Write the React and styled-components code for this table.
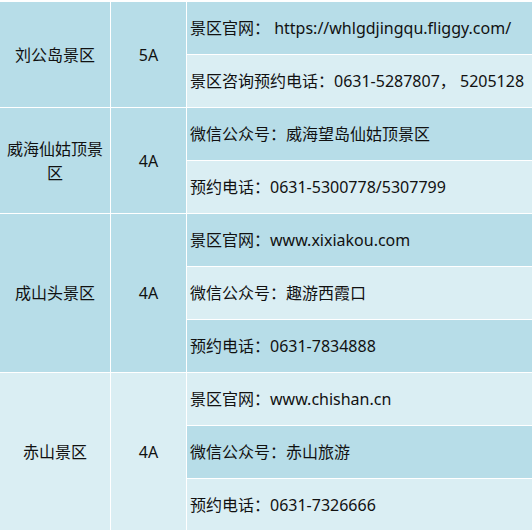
import React from 'react';
import styled, { createGlobalStyle } from 'styled-components';

const GlobalStyle = createGlobalStyle`
  body {
    margin: 0;
    background: #ffffff;
    overflow: hidden;
    font-family: "Noto Sans", "Noto Sans CJK SC", sans-serif;
  }
`;

const DARK = '#b7dde8';
const LIGHT = '#daeef3';

// whole table: groups stacked with 1px white lines between
const Table = styled.div`
  display: flex;
  flex-direction: column;
  gap: 1px;
  padding-top: 2px;
  background: #ffffff;
  color: #111;
  font-size: 16px;
  line-height: 24px;
`;

const Group = styled.div`
  display: grid;
  grid-template-columns: 110px 75px 1fr;
  gap: 1px;
`;

const MergedCell = styled.div`
  background: ${(p) => (p.$dark ? DARK : LIGHT)};
  display: flex;
  align-items: center;
  justify-content: center;
  text-align: center;
  padding: 0 6px;
`;

const InfoList = styled.div`
  display: flex;
  flex-direction: column;
  gap: 1px;
  min-width: 0;
`;

const InfoCell = styled.div`
  background: ${(p) => (p.$dark ? DARK : LIGHT)};
  height: 52px;
  display: flex;
  align-items: center;
  padding: 0 3px;
  white-space: nowrap;
  overflow: hidden;
`;

const spots = [
  {
    name: '刘公岛景区',
    level: '5A',
    items: ['景区官网： https://whlgdjingqu.fliggy.com/', '景区咨询预约电话：0631-5287807， 5205128'],
  },
  {
    name: '威海仙姑顶景区',
    level: '4A',
    items: ['微信公众号：威海望岛仙姑顶景区', '预约电话：0631-5300778/5307799'],
  },
  {
    name: '成山头景区',
    level: '4A',
    items: ['景区官网：www.xixiakou.com', '微信公众号：趣游西霞口', '预约电话：0631-7834888'],
  },
  {
    name: '赤山景区',
    level: '4A',
    items: ['景区官网：www.chishan.cn', '微信公众号：赤山旅游', '预约电话：0631-7326666'],
  },
];

export default function App() {
  let row = 0;
  return (
    <>
      <GlobalStyle />
      <Table>
        {spots.map((s) => {
          const first = row;
          row += s.items.length;
          const dark = first % 2 === 0;
          return (
            <Group key={s.name}>
              <MergedCell $dark={dark}>{s.name}</MergedCell>
              <MergedCell $dark={dark}>{s.level}</MergedCell>
              <InfoList>
                {s.items.map((it, i) => (
                  <InfoCell key={it} $dark={(first + i) % 2 === 0}>
                    {it}
                  </InfoCell>
                ))}
              </InfoList>
            </Group>
          );
        })}
      </Table>
    </>
  );
}
